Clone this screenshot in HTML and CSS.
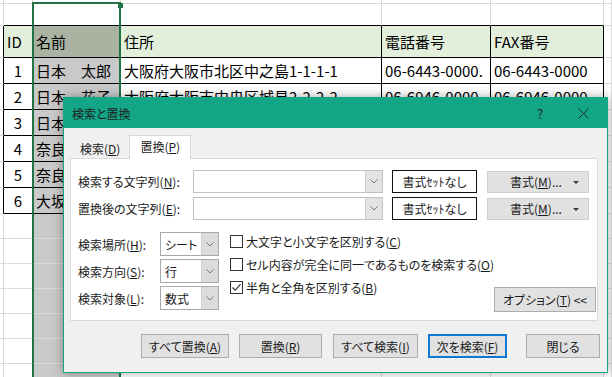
FILE: index.html
```html
<!DOCTYPE html>
<html lang="ja">
<head>
    <meta charset="UTF-8">
    <title>検索と置換</title>
    <link rel="stylesheet" href="styles.css">
</head>
<body>
    <div class="sheet">
        <div class="row r0">
            <div></div><div></div><div class="active"></div><div></div><div></div><div></div><div></div>
        </div>
        <div class="row r1">
            <div></div><div class="top"></div><div class="active top"></div><div class="top"></div><div class="top"></div><div class="top"></div><div></div>
        </div>
        <div class="row head">
            <div class="edge"></div>
            <div class="t hd">ID</div>
            <div class="t hd sel-hd">名前</div>
            <div class="t hd">住所</div>
            <div class="t hd">電話番号</div>
            <div class="t hd">FAX番号</div>
            <div></div>
        </div>
        <div class="row data">
            <div class="edge"></div>
            <div class="t num">1</div>
            <div class="t sel">日本　太郎</div>
            <div class="t">大阪府大阪市北区中之島1-1-1-1</div>
            <div class="t">06-6443-0000.</div>
            <div class="t">06-6443-0000</div>
            <div></div>
        </div>
        <div class="row data">
            <div class="edge"></div>
            <div class="t num">2</div>
            <div class="t sel">日本　花子</div>
            <div class="t">大阪府大阪市中央区城見2-2-2-2</div>
            <div class="t">06-6946-0000</div>
            <div class="t">06-6946-0000</div>
            <div></div>
        </div>
        <div class="row data">
            <div class="edge"></div>
            <div class="t num">3</div>
            <div class="t sel">日本　次郎</div>
            <div class="t">大阪府大阪市西区江戸堀3-3-3-3</div>
            <div class="t">06-6441-0000</div>
            <div class="t">06-6441-0000</div>
            <div></div>
        </div>
        <div class="row data">
            <div class="edge"></div>
            <div class="t num">4</div>
            <div class="t sel">奈良　太郎</div>
            <div class="t">奈良県奈良市登大路町4-4-4</div>
            <div class="t">0742-22-0000</div>
            <div class="t">0742-22-0000</div>
            <div></div>
        </div>
        <div class="row data">
            <div class="edge"></div>
            <div class="t num">5</div>
            <div class="t sel">奈良　花子</div>
            <div class="t">奈良県奈良市三条町5-5-5</div>
            <div class="t">0742-26-0000</div>
            <div class="t">0742-26-0000</div>
            <div></div>
        </div>
        <div class="row data">
            <div class="edge"></div>
            <div class="t num">6</div>
            <div class="t sel">大坂　一郎</div>
            <div class="t">大阪府堺市堺区南瓦町6-6-6</div>
            <div class="t">072-233-0000</div>
            <div class="t">072-233-0000</div>
            <div></div>
        </div>
        <div class="row blank"><div></div><div></div><div class="sel"></div><div></div><div></div><div></div><div></div></div>
        <div class="row blank"><div></div><div></div><div class="sel"></div><div></div><div></div><div></div><div></div></div>
        <div class="row blank"><div></div><div></div><div class="sel"></div><div></div><div></div><div></div><div></div></div>
        <div class="row blank"><div></div><div></div><div class="sel"></div><div></div><div></div><div></div><div></div></div>
        <div class="row blank"><div></div><div></div><div class="sel"></div><div></div><div></div><div></div><div></div></div>
        <div class="row blank"><div></div><div></div><div class="sel"></div><div></div><div></div><div></div><div></div></div>
        <div class="row blank"><div></div><div></div><div class="sel"></div><div></div><div></div><div></div><div></div></div>
    </div>

    <!-- 列Bの選択枠 -->
    <div class="selection"></div>
    <div class="fill-handle"></div>

    <div class="dialog">
        <div class="titlebar">
            <span class="title">検索と置換</span>
            <span class="tb-btn">?</span>
            <span class="tb-btn">
                <svg width="11" height="11" viewBox="0 0 11 11"><path d="M0.5 0.5 L10.5 10.5 M10.5 0.5 L0.5 10.5" stroke="#2a2a2a" stroke-width="1" fill="none"/></svg>
            </span>
        </div>
        <div class="dlg-body">
            <div class="tabs">
                <div class="tab"><span>検索(<u>D</u>)</span></div>
                <div class="tab active"><span>置換(<u>P</u>)</span></div>
            </div>
            <div class="panel">
                <div class="find-row">
                    <span class="lbl">検索する文字列(<u>N</u>):</span>
                    <div class="combo">
                        <span class="combo-arrow"><svg width="8" height="5" viewBox="0 0 8 5"><path d="M0.5 0.5 L4 4 L7.5 0.5" stroke="#777" fill="none"/></svg></span>
                    </div>
                    <button class="fmt-none">書式ｾｯﾄなし</button>
                    <button class="fmt">書式(<u>M</u>)...<span class="caret"></span></button>
                </div>
                <div class="find-row">
                    <span class="lbl">置換後の文字列(<u>E</u>):</span>
                    <div class="combo">
                        <span class="combo-arrow"><svg width="8" height="5" viewBox="0 0 8 5"><path d="M0.5 0.5 L4 4 L7.5 0.5" stroke="#777" fill="none"/></svg></span>
                    </div>
                    <button class="fmt-none">書式ｾｯﾄなし</button>
                    <button class="fmt">書式(<u>M</u>)...<span class="caret"></span></button>
                </div>

                <div class="opts">
                    <div class="scope">
                        <div class="scope-row">
                            <span class="lbl-s">検索場所(<u>H</u>):</span>
                            <div class="sel-box"><span class="sel-val">シート</span><span class="sel-arrow"><svg width="8" height="5" viewBox="0 0 8 5"><path d="M0.5 0.5 L4 4 L7.5 0.5" stroke="#777" fill="none"/></svg></span></div>
                        </div>
                        <div class="scope-row">
                            <span class="lbl-s">検索方向(<u>S</u>):</span>
                            <div class="sel-box"><span class="sel-val">行</span><span class="sel-arrow"><svg width="8" height="5" viewBox="0 0 8 5"><path d="M0.5 0.5 L4 4 L7.5 0.5" stroke="#777" fill="none"/></svg></span></div>
                        </div>
                        <div class="scope-row">
                            <span class="lbl-s">検索対象(<u>L</u>):</span>
                            <div class="sel-box"><span class="sel-val">数式</span><span class="sel-arrow"><svg width="8" height="5" viewBox="0 0 8 5"><path d="M0.5 0.5 L4 4 L7.5 0.5" stroke="#777" fill="none"/></svg></span></div>
                        </div>
                    </div>
                    <div class="checks">
                        <div class="check-row"><span class="box"></span><span>大文字と小文字を区別する(<u>C</u>)</span></div>
                        <div class="check-row"><span class="box"></span><span>セル内容が完全に同一であるものを検索する(<u>O</u>)</span></div>
                        <div class="check-row"><span class="box"><svg width="11" height="11" viewBox="0 0 11 11"><path d="M1.5 5.5 L4.2 8.3 L9.5 2.2" stroke="#222" stroke-width="1.1" fill="none"/></svg></span><span>半角と全角を区別する(<u>B</u>)</span></div>
                    </div>
                    <button class="opt-btn">オプション(<u>T</u>) &lt;&lt;</button>
                </div>
            </div>

            <div class="actions">
                <button class="w1">すべて置換(<u>A</u>)</button>
                <button class="w2">置換(<u>R</u>)</button>
                <button class="w3">すべて検索(<u>I</u>)</button>
                <button class="w4 default">次を検索(<u>F</u>)</button>
                <button class="w5">閉じる</button>
            </div>
        </div>
    </div>
</body>
</html>
```

FILE: styles.css
```css
body {
    margin: 0;
    width: 612px;
    height: 377px;
    overflow: hidden;
    position: relative;
    background-color: #fff;
    font-family: 'Noto Sans CJK JP', 'Liberation Sans', sans-serif;
    color: #000;
}

/* シート */
.sheet {
    font-size: 15px;
}
.row {
    display: grid;
    grid-template-columns: 4px 29px 88px 261px 109px 113px 1fr;
}
.row > div {
    box-sizing: border-box;
    border-right: 1px solid #dadada;
    border-bottom: 1px solid #dadada;
    overflow: hidden;
    white-space: nowrap;
    display: flex;
    align-items: center;
}
.r0 { height: 4px; }
.r1 { height: 22px; }
.head { height: 32px; }
.data { height: 26px; }
.blank { height: 25px; }

.row > .top {
    border-bottom-color: #000;
}
.row > .edge {
    border-right-color: #000;
}
.row > .t {
    border-right-color: #000;
    border-bottom-color: #000;
    padding: 0 3px;
}
.hd {
    background-color: #e2efda;
}
.row > .num {
    justify-content: center;
    padding: 0;
}
.hd.sel-hd {
    background-color: #aab3a2;
}
.sel {
    background-color: #c9c9c9;
}
.active {
    background-color: #fff;
}

.selection {
    position: absolute;
    left: 32px;
    top: 2px;
    width: 89px;
    height: 390px;
    box-sizing: border-box;
    border: 2px solid #217346;
}
.fill-handle {
    position: absolute;
    left: 118px;
    top: 3px;
    width: 5px;
    height: 5px;
    background-color: #217346;
}

/* ダイアログ */
.dialog {
    position: absolute;
    left: 63px;
    top: 97px;
    width: 545px;
    height: 276px;
    box-sizing: border-box;
    border: 1px solid #12a586;
    background-color: #f0f0f0;
    box-shadow: 0 0 10px rgba(0, 0, 0, 0.35);
    font-size: 12px;
    font-feature-settings: "palt";
    color: #1a1a1a;
    white-space: nowrap;
}
.titlebar {
    height: 30px;
    background-color: #12a586;
    display: flex;
    align-items: center;
    padding-left: 8px;
    padding-right: 9px;
}
.title {
    flex: 1;
    color: #1e1e1e;
}
.tb-btn {
    width: 30px;
    height: 30px;
    display: flex;
    align-items: center;
    justify-content: center;
    color: #2a2a2a;
    font-size: 13px;
}
.tb-btn + .tb-btn {
    margin-left: 13px;
}
.dlg-body {
    padding: 7px 0 0 6px;
}
.tabs {
    display: flex;
    align-items: flex-end;
    height: 24px;
    padding-left: 2px;
}
.tab {
    height: 21px;
    padding: 0 8px;
    display: flex;
    align-items: center;
    box-sizing: border-box;
}
.tab.active {
    height: 24px;
    padding: 0 10px 2px 10px;
    background-color: #fff;
    border: 1px solid #d9d9d9;
    border-bottom: none;
    position: relative;
    z-index: 1;
    margin-left: 1px;
}
.panel {
    margin-top: -1px;
    width: 528px;
    height: 163px;
    box-sizing: border-box;
    border: 1px solid #d9d9d9;
    background-color: #fff;
    padding: 11px 6px 0 7px;
}
.find-row {
    display: flex;
    align-items: center;
    height: 23px;
}
.find-row + .find-row {
    margin-top: 4px;
}
.lbl {
    width: 115px;
    flex-shrink: 0;
}
.combo {
    width: 190px;
    height: 23px;
    box-sizing: border-box;
    border: 1px solid #c2c2c2;
    display: flex;
    justify-content: flex-end;
}
.combo-arrow, .sel-arrow {
    width: 16px;
    background-color: #e3e3e3;
    border-left: 1px solid #d2d2d2;
    display: flex;
    align-items: center;
    justify-content: center;
}
button {
    font-family: inherit;
    font-size: 12px;
    font-feature-settings: "palt";
    color: #1a1a1a;
    background-color: #e1e1e1;
    border: 1px solid #adadad;
    padding: 0;
    height: 24px;
    box-sizing: border-box;
    white-space: nowrap;
    flex-shrink: 0;
}
.fmt-none {
    margin-left: 9px;
    width: 85px;
    height: 23px;
    background-color: #fff;
    border-color: #111;
}
.fmt {
    margin-left: 10px;
    width: 102px;
    height: 22px;
    border-color: #cfcfcf;
    position: relative;
    padding-right: 4px;
}
.caret {
    position: absolute;
    right: 9px;
    top: 9px;
    border-left: 3px solid transparent;
    border-right: 3px solid transparent;
    border-top: 3px solid #333;
}
.opts {
    display: flex;
    margin-top: 12px;
}
.scope {
    flex-shrink: 0;
}
.scope-row {
    display: flex;
    align-items: center;
    height: 24px;
}
.scope-row + .scope-row {
    margin-top: 3px;
}
.lbl-s {
    width: 82px;
}
.sel-box {
    width: 59px;
    height: 24px;
    box-sizing: border-box;
    border: 1px solid #a9a9a9;
    display: flex;
}
.sel-val {
    flex: 1;
    padding-left: 4px;
    display: flex;
    align-items: center;
}
.sel-arrow {
    background-color: #dcdcdc;
}
.checks {
    margin-left: 11px;
    margin-top: -2px;
    flex-shrink: 0;
}
.check-row {
    display: flex;
    align-items: center;
    height: 23px;
}
.box {
    width: 13px;
    height: 13px;
    box-sizing: border-box;
    border: 1px solid #333;
    margin-right: 3px;
    display: flex;
    align-items: center;
    justify-content: center;
}
.opt-btn {
    margin-left: auto;
    align-self: flex-end;
    margin-bottom: -2px;
    width: 102px;
    height: 25px;
}
.actions {
    display: flex;
    margin-top: 13px;
    padding-left: 71px;
}
.actions button {
    height: 24px;
}
.w1 { width: 88px; }
.w2 { width: 83px; margin-left: 10px; }
.w3 { width: 85px; margin-left: 11px; }
.w4 { width: 79px; margin-left: 10px; }
.w5 { width: 74px; margin-left: 19px; }
.actions .default {
    border: 2px solid #0f78d4;
}
```
